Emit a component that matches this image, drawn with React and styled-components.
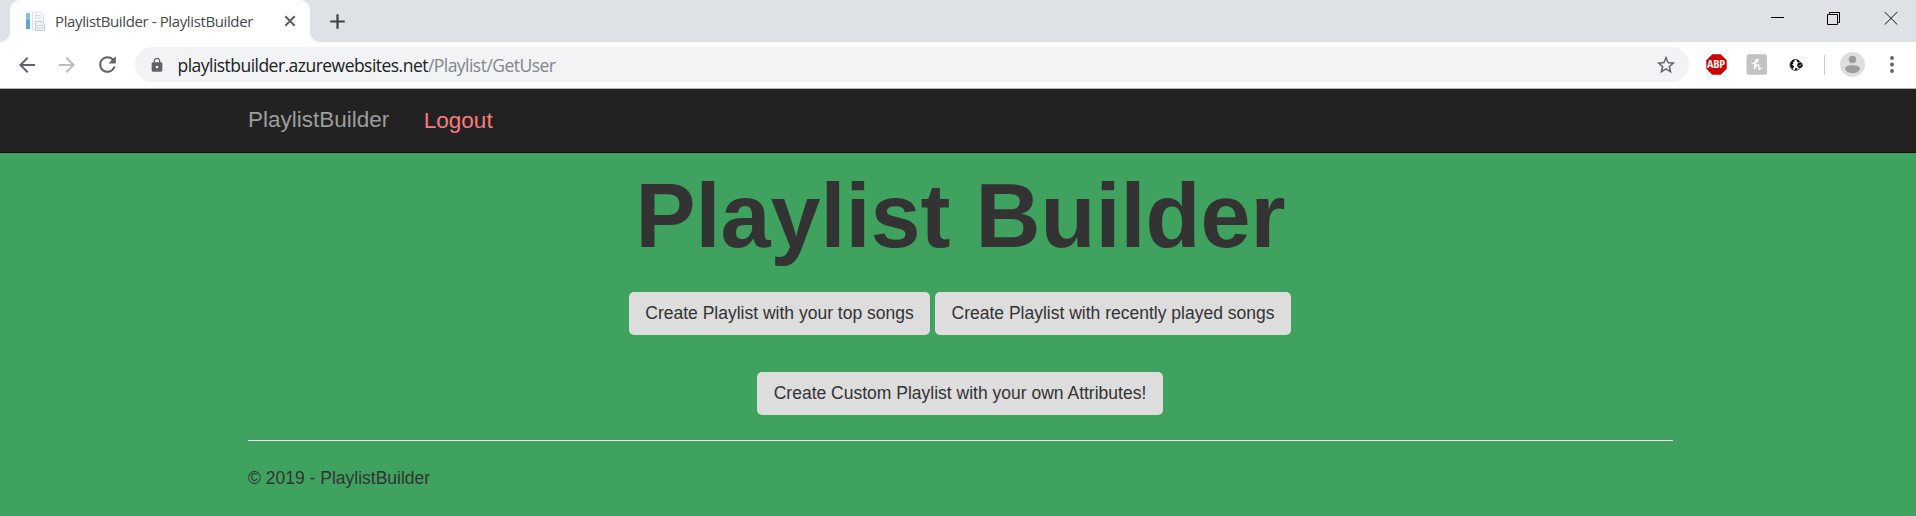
import React from 'react';
import styled, { createGlobalStyle } from 'styled-components';
import { MdArrowBack, MdArrowForward, MdRefresh, MdLock, MdStarBorder } from 'react-icons/md';

const GlobalStyle = createGlobalStyle`
  *, *::before, *::after { box-sizing: border-box; }
  html, body { margin: 0; height: 100%; background: #3fa35f; overflow: hidden; }
  body { font-family: Arial, 'Liberation Sans', sans-serif; font-size: 17.5px; line-height: 25px; color: #333; }
  svg { display: block; flex: none; }
`;

const TabStrip = styled.div`
  display: flex;
  height: 42px;
  padding-left: 10px;
  background: #dee1e6;
`;

const Tab = styled.div`
  position: relative;
  display: flex;
  align-items: center;
  width: 300px;
  padding: 0 12px 0 15px;
  background: #fff;
  border-radius: 10px 10px 0 0;
  &::before, &::after {
    content: '';
    position: absolute;
    bottom: 0;
    width: 10px;
    height: 10px;
  }
  &::before { left: -10px; background: radial-gradient(circle at 0 0, #dee1e6 9.5px, #fff 10.5px); }
  &::after { right: -10px; background: radial-gradient(circle at 100% 0, #dee1e6 9.5px, #fff 10.5px); }
`;

const TabTitle = styled.span`
  flex: 1;
  margin-left: 10px;
  font: 15px/20px 'Open Sans', sans-serif;
  letter-spacing: -0.38px;
  white-space: nowrap;
  color: #45484c;
`;

const NewTab = styled.div`
  display: flex;
  align-items: center;
  padding-left: 19px;
`;

const WindowControls = styled.div`
  display: flex;
  gap: 43px;
  margin: 11px 18px 0 auto;
`;

const Toolbar = styled.div`
  display: flex;
  align-items: center;
  height: 47px;
  padding: 0 4px 1px 7px;
  background: #fff;
  border-bottom: 1px solid #b1b1b1;
`;

const ToolSlot = styled.div`
  display: flex;
  align-items: center;
  justify-content: center;
  width: 40px;
  height: 40px;
  color: ${({ $dim }) => ($dim ? '#babcbe' : '#5f6368')};
`;

const AddressBar = styled.div`
  display: flex;
  flex: 1;
  align-items: center;
  height: 35px;
  margin: 0 7px 0 8px;
  padding: 0 12px 0 14px;
  border-radius: 18px;
  background: #f1f3f4;
  color: #5f6368;
`;

const Url = styled.span`
  flex: 1;
  margin-left: 12.5px;
  font: 17.5px/24px 'Open Sans', sans-serif;
  letter-spacing: -0.53px;
  white-space: nowrap;
  color: #202124;
`;

const UrlPath = styled.span`
  color: #80868b;
`;

const Separator = styled.div`
  width: 1px;
  height: 20px;
  margin: 0 7px 0 8px;
  background: #c8cacc;
`;

const Navbar = styled.nav`
  display: flex;
  height: 64px;
  padding-left: 248px;
  background: #222;
  border-bottom: 1px solid #080808;
  font-size: 22.5px;
  line-height: 25px;
`;

const Brand = styled.a`
  margin-top: 18px;
  color: #9d9d9d;
`;

const Logout = styled.a`
  margin: 19px 0 0 34.5px;
  color: #fb7a7a;
`;

const Page = styled.main`
  width: 1425px;
  margin-left: 248px;
`;

const Title = styled.h1`
  margin: 0;
  padding-top: 13px;
  font-size: 90px;
  font-weight: 700;
  line-height: 100px;
  text-align: center;
`;

const ButtonRow = styled.div`
  display: flex;
  justify-content: center;
  gap: 5px;
  margin: ${({ $top }) => $top}px 2px 0 0;
`;

const Button = styled.button`
  height: 43px;
  width: ${({ $width }) => $width}px;
  padding: 0 0 0 1px;
  border: 0;
  border-radius: 5px;
  background: #ddd;
  color: #333;
  font: inherit;
  white-space: nowrap;
`;

const Rule = styled.hr`
  margin: 25px 0;
  border: 0;
  border-top: 1px solid #eee;
`;

const Copyright = styled.p`
  margin: 0;
`;

const Stack = styled.div`
  display: grid;
  place-items: center;
  > * { grid-area: 1 / 1; }
`;

const BadgeLabel = styled.span`
  font: 700 9.4px/14px 'Open Sans', sans-serif;
  letter-spacing: -0.2px;
  color: #fff;
  transform: scaleY(1.15);
`;

const Favicon = () => (
  <svg width="20" height="20" viewBox="0 0 20 20">
    <rect x="1" y="2.5" width="4" height="15.5" fill="#5aa5d6" />
    <path d="M1 2.5h4v6H1z" fill="#84c0e4" />
    <path d="M7.500 1h8l3 3v15h-11z" fill="#f6f7fa" stroke="#dcdfe4" />
    <path d="M10 4.500h5M10 7h6" stroke="#d5d8df" />
    <path d="M10.500 10.500h6.500l2.500 2.500v6.500h-9z" fill="#eef1f5" stroke="#c8cdd5" />
    <path d="M12.500 14.500h5v2.500h-5z" fill="#fff" stroke="#ccd1d8" />
  </svg>
);

const AdBlock = () => (
  <Stack>
    <svg width="21" height="21" viewBox="0 0 21 21">
      <path d="M6.300 0.300h8.400l6 6v8.400l-6 6H6.300l-6-6V6.300z" fill="#cb0303" />
    </svg>
    <BadgeLabel>ABP</BadgeLabel>
  </Stack>
);

const Honey = () => (
  <svg width="21" height="21" viewBox="0 0 21 21">
    <rect x=".5" y=".3" width="20.500" height="20.500" rx="2.500" fill="#c3c3c3" />
    <path d="M6 9.600C9.500 9.200 12.400 7.500 12.300 6C12.100 4.400 9.600 5 9.200 8.500L8.500 15.300C9.400 12 11.400 10 12.500 10.500C13.800 11.300 11.700 15.300 13.400 15.300C14.200 15.300 14.700 14.800 15 14.200" fill="none" stroke="#fff" strokeWidth="1.400" strokeLinecap="round" />
  </svg>
);

const Globe = () => (
  <svg width="14" height="14" viewBox="0 0 14 14">
    <circle cx="6.500" cy="7" r="5.500" fill="#fff" stroke="#333" strokeWidth=".9" />
    <path d="M1.200 5.500L3 2.500L5.800 1.600L5.300 3.500L4 4.300L4.400 5.700L3 6.500L5 8.200L4.500 10L3.600 11L1.500 8.800z" fill="#111" />
    <path d="M7.500 1.600L10.700 3.200L9.800 4.700L8 3.800z" fill="#111" />
    <path d="M6.400 10L9 10.400L7.500 12.300L5.800 11.800z" fill="#111" />
    <circle cx="11" cy="7.200" r="2.700" fill="#111" />
    <path d="M9.900 7.200l.9.900L12.300 6.400" fill="none" stroke="#ddd" strokeWidth=".8" />
  </svg>
);

const Avatar = () => (
  <svg width="25" height="25" viewBox="0 0 25 25">
    <circle cx="12.500" cy="12.500" r="12.500" fill="#dedede" />
    <circle cx="12.500" cy="7.500" r="3.700" fill="#9c9c9c" />
    <path d="M5 17c0-2.300 3-3.800 7.500-3.800S20 14.700 20 17c-1.500 3-4.500 4.300-7.500 4.300S6.500 20 5 17z" fill="#9c9c9c" />
  </svg>
);

const MenuDots = () => (
  <svg width="4" height="17" viewBox="0 0 4 17">
    {[2, 8.5, 15].map((y) => <circle key={y} cx="2" cy={y} r="1.9" fill="#5f6368" />)}
  </svg>
);

export default function App() {
  return (
    <>
      <GlobalStyle />
      <TabStrip>
        <Tab>
          <Favicon />
          <TabTitle>PlaylistBuilder - PlaylistBuilder</TabTitle>
          <svg width="16" height="16" viewBox="0 0 16 16">
            <path d="M3.300 3.300l9.400 9.400M12.700 3.300l-9.400 9.400" stroke="#5b5f63" strokeWidth="2" />
          </svg>
        </Tab>
        <NewTab>
          <svg width="17" height="17" viewBox="0 0 17 17">
            <path d="M8.500 1.300v14.400M1.300 8.500h14.400" stroke="#3c4043" strokeWidth="2.200" />
          </svg>
        </NewTab>
        <WindowControls>
          <svg width="13" height="15" viewBox="0 0 13 15"><path d="M0 6.500h13" stroke="#000" /></svg>
          <svg width="14" height="15" viewBox="0 0 14 15">
            <path d="M.5 3.500h10v10H.5zM2.500 3.500v-2h10v10h-2" fill="none" stroke="#000" />
          </svg>
          <svg width="14" height="15" viewBox="0 0 14 15"><path d="M.7 1l12.600 12.600M13.300 1L.7 13.600" stroke="#111" /></svg>
        </WindowControls>
      </TabStrip>
      <Toolbar>
        <ToolSlot><MdArrowBack size={24} /></ToolSlot>
        <ToolSlot $dim><MdArrowForward size={24} /></ToolSlot>
        <ToolSlot><MdRefresh size={25} /></ToolSlot>
        <AddressBar>
          <MdLock size={16} />
          <Url>playlistbuilder.azurewebsites.net<UrlPath>/Playlist/GetUser</UrlPath></Url>
          <MdStarBorder size={22} />
        </AddressBar>
        <ToolSlot><AdBlock /></ToolSlot>
        <ToolSlot><Honey /></ToolSlot>
        <ToolSlot><Globe /></ToolSlot>
        <Separator />
        <ToolSlot><Avatar /></ToolSlot>
        <ToolSlot><MenuDots /></ToolSlot>
      </Toolbar>
      <Navbar>
        <Brand>PlaylistBuilder</Brand>
        <Logout>Logout</Logout>
      </Navbar>
      <Page>
        <Title>Playlist Builder</Title>
        <ButtonRow $top={26}>
          <Button $width={301}>Create Playlist with your top songs</Button>
          <Button $width={356}>Create Playlist with recently played songs</Button>
        </ButtonRow>
        <ButtonRow $top={37}>
          <Button $width={406}>Create Custom Playlist with your own Attributes!</Button>
        </ButtonRow>
        <Rule />
        <Copyright>© 2019 - PlaylistBuilder</Copyright>
      </Page>
    </>
  );
}
